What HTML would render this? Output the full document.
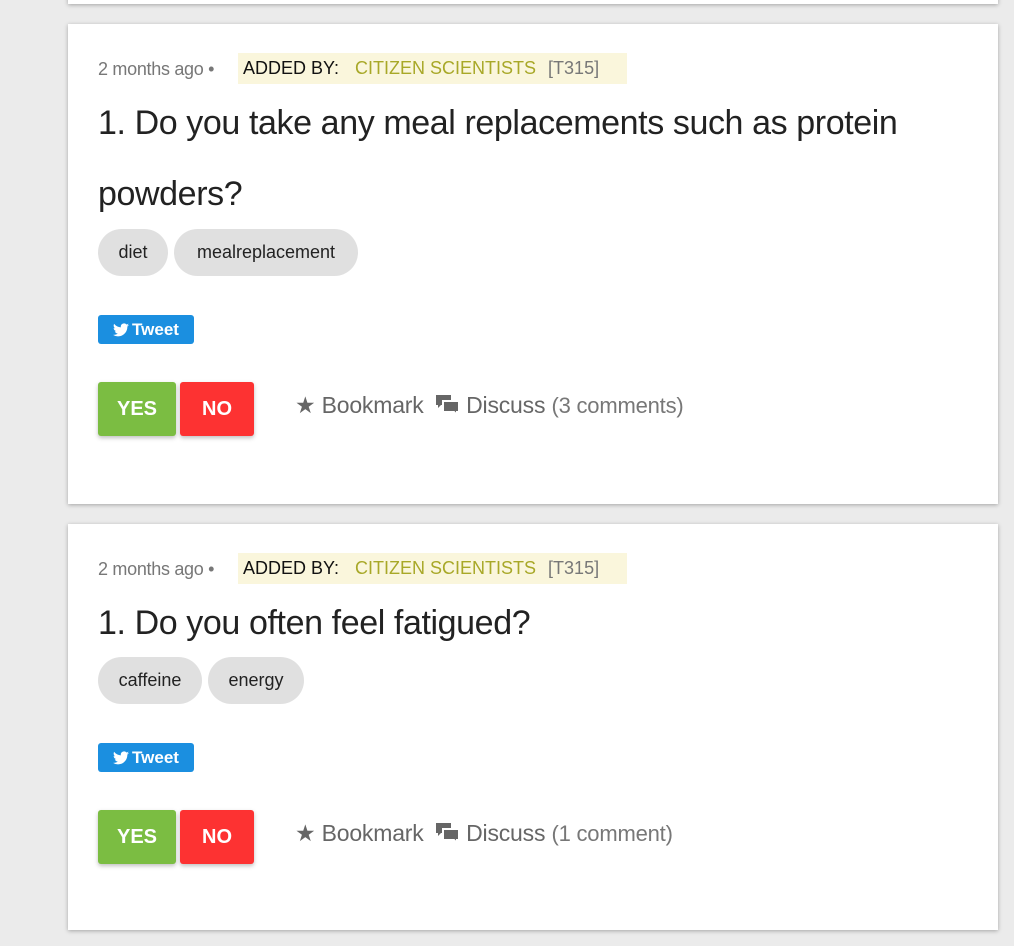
<!DOCTYPE html>
<html><head><style>
body{margin:0;width:1014px;height:946px;background:#ebebeb;position:relative;overflow:hidden;font-family:"Liberation Sans",sans-serif;}
.card{position:absolute;left:68px;width:930px;background:#fff;box-shadow:0 1px 4px rgba(0,0,0,.3);}
.a{position:absolute;white-space:nowrap;}
.meta{font-size:18px;color:#777;letter-spacing:-.3px}
.badge{background:#faf6dc;height:31px;line-height:31px;font-size:18px;padding:0 6px 0 5px;width:378px;}
.badge b{font-weight:normal;color:#111}.badge i{font-style:normal;color:#a8a828;margin-left:16px}.badge u{text-decoration:none;color:#777;margin-left:12px}
.title{font-size:34px;color:#222;font-weight:300;letter-spacing:-.4px}
.tag{background:#e0e0e0;border-radius:24px;height:47px;line-height:47px;font-size:18px;color:#222;text-align:center}
.tw{background:#1b8fe0;color:#fff;border-radius:3px;width:96px;height:29px;line-height:29px;font-weight:bold;font-size:17px;text-align:center}
.tw svg{vertical-align:-2px;margin-right:3px}
.btn{height:54px;line-height:54px;color:#fff;font-weight:bold;font-size:20px;text-align:center;border-radius:3px;box-shadow:0 2px 4px rgba(0,0,0,.25)}
.act{font-size:23px;color:#666;letter-spacing:-.2px}.act span{color:#777;font-size:22px}
.act svg{vertical-align:-2px}
</style></head><body>
<div class="card" style="top:-10px;height:14px"></div>

<div class="card" style="top:24px;height:480px">
<div class="a meta" style="left:30px;top:35px">2 months ago •</div>
<div class="a badge" style="left:170px;top:29px"><b>ADDED BY:</b><i>CITIZEN SCIENTISTS</i><u>[T315]</u></div>
<div class="a title" style="left:30px;top:80px">1. Do you take any meal replacements such as protein</div>
<div class="a title" style="left:30px;top:151px">powders?</div>
<div class="a tag" style="left:30px;top:205px;width:70px">diet</div>
<div class="a tag" style="left:106px;top:205px;width:184px">mealreplacement</div>
<div class="a tw" style="left:30px;top:291px"><svg width="16" height="14" viewBox="0 0 24 20"><path fill="#fff" d="M24 2.4a10 10 0 0 1-2.8.8A5 5 0 0 0 23.3.5a10 10 0 0 1-3.1 1.2A4.9 4.9 0 0 0 11.8 6 14 14 0 0 1 1.7.9a4.9 4.9 0 0 0 1.5 6.6A4.9 4.9 0 0 1 1 6.9a4.9 4.9 0 0 0 3.9 4.8 5 5 0 0 1-2.2.1 4.9 4.9 0 0 0 4.6 3.4A9.9 9.9 0 0 1 0 17.3 14 14 0 0 0 7.5 19.5c9 0 14-7.5 14-14v-.6A10 10 0 0 0 24 2.4z"/></svg>Tweet</div>
<div class="a btn" style="left:30px;top:358px;width:78px;background:#7bbd42">YES</div>
<div class="a btn" style="left:112px;top:358px;width:74px;background:#fd3232">NO</div>
<div class="a act" style="left:227px;top:368px">★ Bookmark &nbsp;<svg width="24" height="20" viewBox="0 0 24 20"><path fill="#666" d="M0 0h15v10H5l-3 3v-3H0z"/><path fill="#666" stroke="#fff" stroke-width="2" d="M7 6h16v11h-2v3l-3-3H7z"/></svg> Discuss <span>(3 comments)</span></div>
</div>

<div class="card" style="top:524px;height:406px">
<div class="a meta" style="left:30px;top:35px">2 months ago •</div>
<div class="a badge" style="left:170px;top:29px"><b>ADDED BY:</b><i>CITIZEN SCIENTISTS</i><u>[T315]</u></div>
<div class="a title" style="left:30px;top:80px">1. Do you often feel fatigued?</div>
<div class="a tag" style="left:30px;top:133px;width:104px">caffeine</div>
<div class="a tag" style="left:140px;top:133px;width:96px">energy</div>
<div class="a tw" style="left:30px;top:219px"><svg width="16" height="14" viewBox="0 0 24 20"><path fill="#fff" d="M24 2.4a10 10 0 0 1-2.8.8A5 5 0 0 0 23.3.5a10 10 0 0 1-3.1 1.2A4.9 4.9 0 0 0 11.8 6 14 14 0 0 1 1.7.9a4.9 4.9 0 0 0 1.5 6.6A4.9 4.9 0 0 1 1 6.9a4.9 4.9 0 0 0 3.9 4.8 5 5 0 0 1-2.2.1 4.9 4.9 0 0 0 4.6 3.4A9.9 9.9 0 0 1 0 17.3 14 14 0 0 0 7.5 19.5c9 0 14-7.5 14-14v-.6A10 10 0 0 0 24 2.4z"/></svg>Tweet</div>
<div class="a btn" style="left:30px;top:286px;width:78px;background:#7bbd42">YES</div>
<div class="a btn" style="left:112px;top:286px;width:74px;background:#fd3232">NO</div>
<div class="a act" style="left:227px;top:296px">★ Bookmark &nbsp;<svg width="24" height="20" viewBox="0 0 24 20"><path fill="#666" d="M0 0h15v10H5l-3 3v-3H0z"/><path fill="#666" stroke="#fff" stroke-width="2" d="M7 6h16v11h-2v3l-3-3H7z"/></svg> Discuss <span>(1 comment)</span></div>
</div>
</body></html>
